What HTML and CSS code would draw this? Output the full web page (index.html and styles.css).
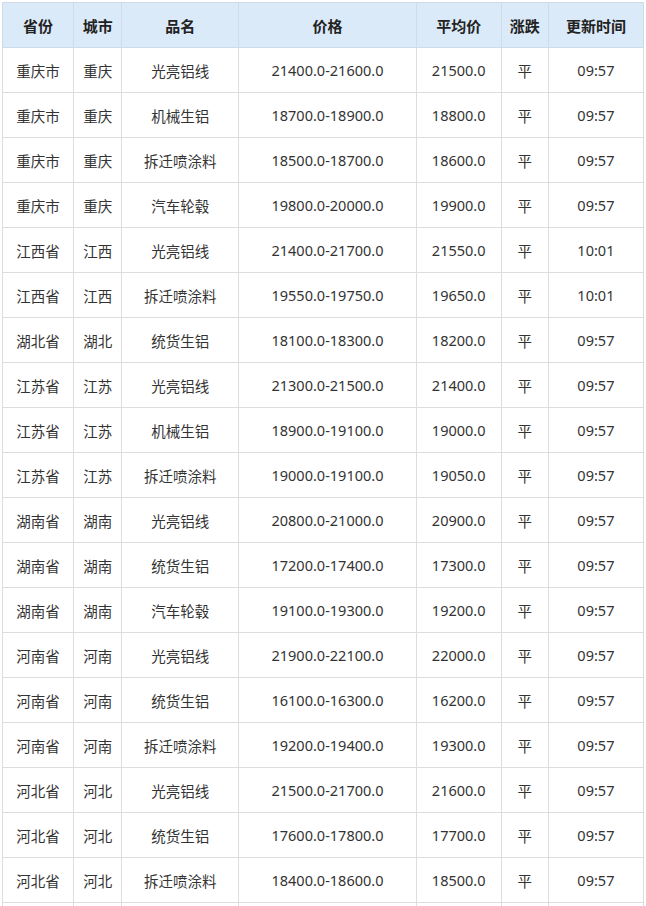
FILE: index.html
```html
<!DOCTYPE html>
<html lang="zh">
<head>
<meta charset="utf-8">
<title>价格表</title>
<link rel="stylesheet" href="styles.css">
</head>
<body>
<div class="wrap">
<table class="price-table">
<colgroup>
<col class="c-prov"><col class="c-city"><col class="c-name"><col class="c-price"><col class="c-avg"><col class="c-chg"><col class="c-time">
</colgroup>
<thead>
<tr><th>省份</th><th>城市</th><th>品名</th><th>价格</th><th>平均价</th><th>涨跌</th><th>更新时间</th></tr>
</thead>
<tbody>
<tr><td>重庆市</td><td>重庆</td><td>光亮铝线</td><td>21400.0-21600.0</td><td>21500.0</td><td>平</td><td>09:57</td></tr>
<tr><td>重庆市</td><td>重庆</td><td>机械生铝</td><td>18700.0-18900.0</td><td>18800.0</td><td>平</td><td>09:57</td></tr>
<tr><td>重庆市</td><td>重庆</td><td>拆迁喷涂料</td><td>18500.0-18700.0</td><td>18600.0</td><td>平</td><td>09:57</td></tr>
<tr><td>重庆市</td><td>重庆</td><td>汽车轮毂</td><td>19800.0-20000.0</td><td>19900.0</td><td>平</td><td>09:57</td></tr>
<tr><td>江西省</td><td>江西</td><td>光亮铝线</td><td>21400.0-21700.0</td><td>21550.0</td><td>平</td><td>10:01</td></tr>
<tr><td>江西省</td><td>江西</td><td>拆迁喷涂料</td><td>19550.0-19750.0</td><td>19650.0</td><td>平</td><td>10:01</td></tr>
<tr><td>湖北省</td><td>湖北</td><td>统货生铝</td><td>18100.0-18300.0</td><td>18200.0</td><td>平</td><td>09:57</td></tr>
<tr><td>江苏省</td><td>江苏</td><td>光亮铝线</td><td>21300.0-21500.0</td><td>21400.0</td><td>平</td><td>09:57</td></tr>
<tr><td>江苏省</td><td>江苏</td><td>机械生铝</td><td>18900.0-19100.0</td><td>19000.0</td><td>平</td><td>09:57</td></tr>
<tr><td>江苏省</td><td>江苏</td><td>拆迁喷涂料</td><td>19000.0-19100.0</td><td>19050.0</td><td>平</td><td>09:57</td></tr>
<tr><td>湖南省</td><td>湖南</td><td>光亮铝线</td><td>20800.0-21000.0</td><td>20900.0</td><td>平</td><td>09:57</td></tr>
<tr><td>湖南省</td><td>湖南</td><td>统货生铝</td><td>17200.0-17400.0</td><td>17300.0</td><td>平</td><td>09:57</td></tr>
<tr><td>湖南省</td><td>湖南</td><td>汽车轮毂</td><td>19100.0-19300.0</td><td>19200.0</td><td>平</td><td>09:57</td></tr>
<tr><td>河南省</td><td>河南</td><td>光亮铝线</td><td>21900.0-22100.0</td><td>22000.0</td><td>平</td><td>09:57</td></tr>
<tr><td>河南省</td><td>河南</td><td>统货生铝</td><td>16100.0-16300.0</td><td>16200.0</td><td>平</td><td>09:57</td></tr>
<tr><td>河南省</td><td>河南</td><td>拆迁喷涂料</td><td>19200.0-19400.0</td><td>19300.0</td><td>平</td><td>09:57</td></tr>
<tr><td>河北省</td><td>河北</td><td>光亮铝线</td><td>21500.0-21700.0</td><td>21600.0</td><td>平</td><td>09:57</td></tr>
<tr><td>河北省</td><td>河北</td><td>统货生铝</td><td>17600.0-17800.0</td><td>17700.0</td><td>平</td><td>09:57</td></tr>
<tr><td>河北省</td><td>河北</td><td>拆迁喷涂料</td><td>18400.0-18600.0</td><td>18500.0</td><td>平</td><td>09:57</td></tr>
<tr class="tail"><td></td><td></td><td></td><td></td><td></td><td></td><td></td></tr>
</tbody>
</table>
</div>
</body>
</html>
```

FILE: styles.css
```css
html, body {
  margin: 0;
  padding: 0;
  background: #ffffff;
}
.wrap {
  padding: 2px 0 0 2px;
}
.price-table {
  border-collapse: collapse;
  table-layout: fixed;
  width: 642px;
  font-family: "Noto Sans", "Noto Sans CJK SC", sans-serif;
  font-size: 14.5px;
  color: #333333;
}
.c-prov { width: 71px; }
.c-city { width: 48px; }
.c-name { width: 117px; }
.c-price { width: 177px; }
.c-avg { width: 85px; }
.c-chg { width: 47px; }
.c-time { width: 95px; }
.price-table th,
.price-table td {
  border: 1px solid #dddddd;
  text-align: center;
  vertical-align: middle;
  padding: 0;
  height: 44px;
  white-space: nowrap;
}
.price-table th {
  background: #dbeaf8;
  border-color: #cfdbe6;
  font-weight: bold;
  color: #222222;
  font-size: 15px;
  height: 44px;
}
.price-table .tail td {
  height: 44px;
}
```
